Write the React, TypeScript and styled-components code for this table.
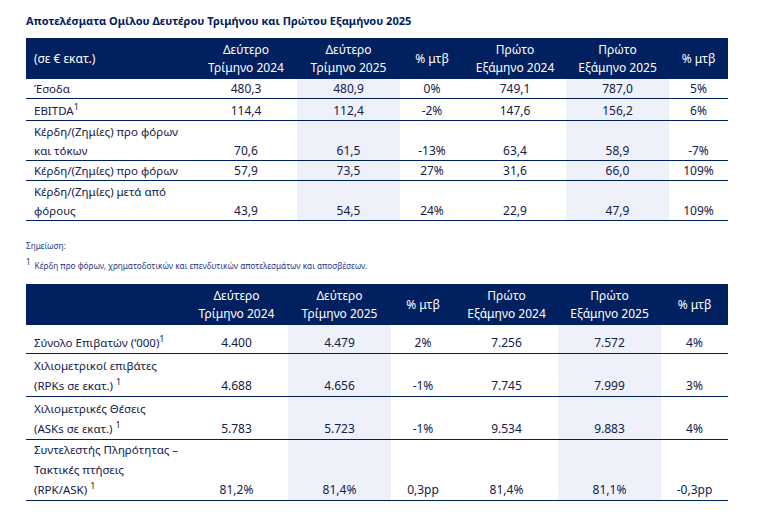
import React from "react";
import styled, { createGlobalStyle } from "styled-components";

const Global = createGlobalStyle`
  html, body { margin: 0; padding: 0; background: #ffffff; }
  body { font-family: "Noto Sans", "Liberation Sans", sans-serif; }
`;

const NAVY = "#002060";
const TEXT = "#13204a";
const SHADE = "#eef1f9";

const Page = styled.div`
  width: 760px;
  height: 523px;
  box-sizing: border-box;
  padding: 14px 32px 0 26px;
  font-family: "Noto Sans", "Liberation Sans", sans-serif;
  color: ${TEXT};
`;

const Title = styled.h1`
  margin: 0 0 10px 0;
  font-size: 11px;
  line-height: 14px;
  font-weight: 700;
  color: ${NAVY};
`;

const Table = styled.table`
  width: 702px;
  table-layout: fixed;
  border-collapse: collapse;
  font-size: 11.5px;
`;

const HeadRow = styled.tr`
  height: 41px;
  background: ${NAVY};
`;

const Th = styled.th<{ $left?: boolean }>`
  padding: 0 0 0 ${(p) => (p.$left ? "8px" : "0")};
  color: #ffffff;
  font-size: 12px;
  font-weight: 400;
  line-height: 18px;
  text-align: ${(p) => (p.$left ? "left" : "center")};
  vertical-align: middle;
`;

const Row = styled.tr<{ $h: number }>`
  height: ${(p) => p.$h}px;
  border-bottom: 1px solid ${NAVY};
`;

const Label = styled.td<{ $lh: number }>`
  padding: 0 0 0 8px;
  line-height: ${(p) => p.$lh}px;
  text-align: left;
  vertical-align: bottom;
  white-space: nowrap;
`;

const Cell = styled.td<{ $shade?: boolean; $lh: number }>`
  padding: 0;
  font-size: 12px;
  line-height: ${(p) => p.$lh}px;
  text-align: center;
  vertical-align: bottom;
  background: ${(p) => (p.$shade ? SHADE : "transparent")};
`;

const Sup = styled.sup`
  font-size: 9px;
  line-height: 0;
  vertical-align: 5px;
`;

const Notes = styled.div`
  margin: 20px 0 0 0;
  font-size: 8.2px;
  color: #1f3a80;
`;

const NoteLine = styled.div<{ $mt: number }>`
  margin-top: ${(p) => p.$mt}px;
  line-height: 10px;
`;

const NoteSup = styled.span`
  display: inline-block;
  font-size: 8px;
  vertical-align: 4px;
  margin-right: 4px;
`;

const Spacer = styled.div`
  height: 13px;
`;

type R = { label: React.ReactNode; vals: string[]; h: number };

const t1: R[] = [
  { label: "Έσοδα", vals: ["480,3", "480,9", "0%", "749,1", "787,0", "5%"], h: 19 },
  {
    label: (
      <>
        EBITDA<Sup>1</Sup>
      </>
    ),
    vals: ["114,4", "112,4", "-2%", "147,6", "156,2", "6%"],
    h: 22,
  },
  {
    label: (
      <>
        Κέρδη/(Ζημίες) προ φόρων
        <br />
        και τόκων
      </>
    ),
    vals: ["70,6", "61,5", "-13%", "63,4", "58,9", "-7%"],
    h: 40,
  },
  { label: "Κέρδη/(Ζημίες) προ φόρων", vals: ["57,9", "73,5", "27%", "31,6", "66,0", "109%"], h: 20 },
  {
    label: (
      <>
        Κέρδη/(Ζημίες) μετά από
        <br />
        φόρους
      </>
    ),
    vals: ["43,9", "54,5", "24%", "22,9", "47,9", "109%"],
    h: 40,
  },
];

const t2: R[] = [
  {
    label: (
      <>
        Σύνολο Επιβατών (‘000)<Sup>1</Sup>
      </>
    ),
    vals: ["4.400", "4.479", "2%", "7.256", "7.572", "4%"],
    h: 28,
  },
  {
    label: (
      <>
        Χιλιομετρικοί επιβάτες
        <br />
        (RPKs σε εκατ.) <Sup>1</Sup>
      </>
    ),
    vals: ["4.688", "4.656", "-1%", "7.745", "7.999", "3%"],
    h: 43,
  },
  {
    label: (
      <>
        Χιλιομετρικές Θέσεις
        <br />
        (ASKs σε εκατ.) <Sup>1</Sup>
      </>
    ),
    vals: ["5.783", "5.723", "-1%", "9.534", "9.883", "4%"],
    h: 43,
  },
  {
    label: (
      <>
        Συντελεστής Πληρότητας –
        <br />
        Τακτικές πτήσεις
        <br />
        (RPK/ASK) <Sup>1</Sup>
      </>
    ),
    vals: ["81,2%", "81,4%", "0,3pp", "81,4%", "81,1%", "-0,3pp"],
    h: 60,
  },
];

const heads = [
  ["Δεύτερο", "Τρίμηνο 2024"],
  ["Δεύτερο", "Τρίμηνο 2025"],
  ["% μτβ"],
  ["Πρώτο", "Εξάμηνο 2024"],
  ["Πρώτο", "Εξάμηνο 2025"],
  ["% μτβ"],
];

function DataTable({
  widths,
  first,
  rows,
  lh,
}: {
  widths: number[];
  first: string;
  rows: R[];
  lh: number;
}) {
  return (
    <Table>
      <colgroup>
        {widths.map((w, i) => (
          <col key={i} style={{ width: w }} />
        ))}
      </colgroup>
      <thead>
        <HeadRow>
          <Th $left>{first}</Th>
          {heads.map((h, i) => (
            <Th key={i}>
              {h.map((l, j) => (
                <React.Fragment key={j}>
                  {j > 0 && <br />}
                  {l}
                </React.Fragment>
              ))}
            </Th>
          ))}
        </HeadRow>
      </thead>
      <tbody>
        {rows.map((r, i) => (
          <Row key={i} $h={r.h}>
            <Label $lh={lh}>{r.label}</Label>
            {r.vals.map((v, j) => (
              <Cell key={j} $lh={lh} $shade={j === 1 || j === 4}>
                {v}
              </Cell>
            ))}
          </Row>
        ))}
      </tbody>
    </Table>
  );
}

export default function App() {
  return (
    <Page>
      <Global />
      <Title>Αποτελέσματα Ομίλου Δευτέρου Τριμήνου και Πρώτου Εξαμήνου 2025</Title>
      <DataTable
        widths={[169, 102, 103, 64, 102, 103, 59]}
        first="(σε € εκατ.)"
        rows={t1}
        lh={19}
      />
      <Notes>
        <NoteLine $mt={0}>Σημείωση:</NoteLine>
        <NoteLine $mt={6}>
          <NoteSup>1</NoteSup>
          Κέρδη προ φόρων, χρηματοδοτικών και επενδυτικών αποτελεσμάτων και αποσβέσεων.
        </NoteLine>
      </Notes>
      <Spacer />
      <DataTable
        widths={[159, 103, 103, 64, 103, 103, 67]}
        first=""
        rows={t2}
        lh={20}
      />
    </Page>
  );
}
